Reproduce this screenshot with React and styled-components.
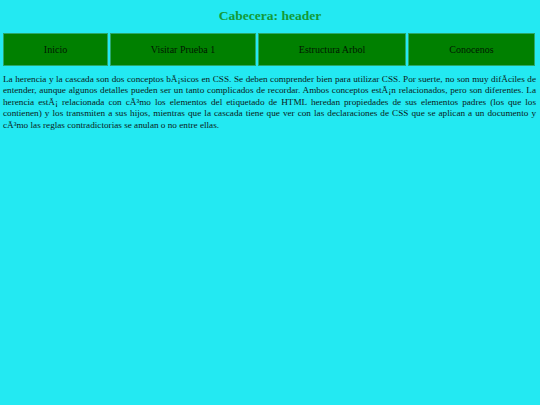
import React from "react";
import styled, { createGlobalStyle } from "styled-components";

const Global = createGlobalStyle`
  html, body { margin: 0; padding: 0; background: #23e9f2; }
  body { font-family: "Liberation Serif", "Times New Roman", serif; min-height: 405px; }
`;

const Header = styled.h1`
  margin: 0;
  padding: 8px 0 9px;
  line-height: 16px;
  font-size: 13.5px;
  font-weight: bold;
  text-align: center;
  color: #139a38;
`;

const Nav = styled.nav`
  display: flex;
  gap: 2px;
  padding: 0 5px 0 3px;
`;

const NavItem = styled.a`
  flex: 0 0 ${(p) => p.$w}px;
  box-sizing: border-box;
  height: 33px;
  display: flex;
  align-items: center;
  justify-content: center;
  background: #008000;
  border: 1px solid #2aa66a;
  color: #001800;
  font-size: 10px;
  text-decoration: none;
`;

const Paragraph = styled.p`
  margin: 8px 4px 0 3px;
  font-size: 9.2px;
  line-height: 11.4px;
  text-align: justify;
  color: #0a1a1a;
`;

const items = [
  ["Inicio", 105],
  ["Visitar Prueba 1", 146],
  ["Estructura Arbol", 148],
  ["Conocenos", 127],
];

export default function App() {
  return (
    <>
      <Global />
      <Header>Cabecera: header</Header>
      <Nav>
        {items.map(([t, w]) => (
          <NavItem key={t} $w={w}>{t}</NavItem>
        ))}
      </Nav>
      <Paragraph>
        La herencia y la cascada son dos conceptos bÃ¡sicos en CSS. Se deben comprender bien para utilizar CSS. Por suerte, no son muy difÃ{"\u00AD"}ciles de entender, aunque algunos detalles pueden ser un tanto complicados de recordar. Ambos conceptos estÃ¡n relacionados, pero son diferentes. La herencia estÃ¡ relacionada con cÃ³mo los elementos del etiquetado de HTML heredan propiedades de sus elementos padres (los que los contienen) y los transmiten a sus hijos, mientras que la cascada tiene que ver con las declaraciones de CSS que se aplican a un documento y cÃ³mo las reglas contradictorias se anulan o no entre ellas.
      </Paragraph>
    </>
  );
}
